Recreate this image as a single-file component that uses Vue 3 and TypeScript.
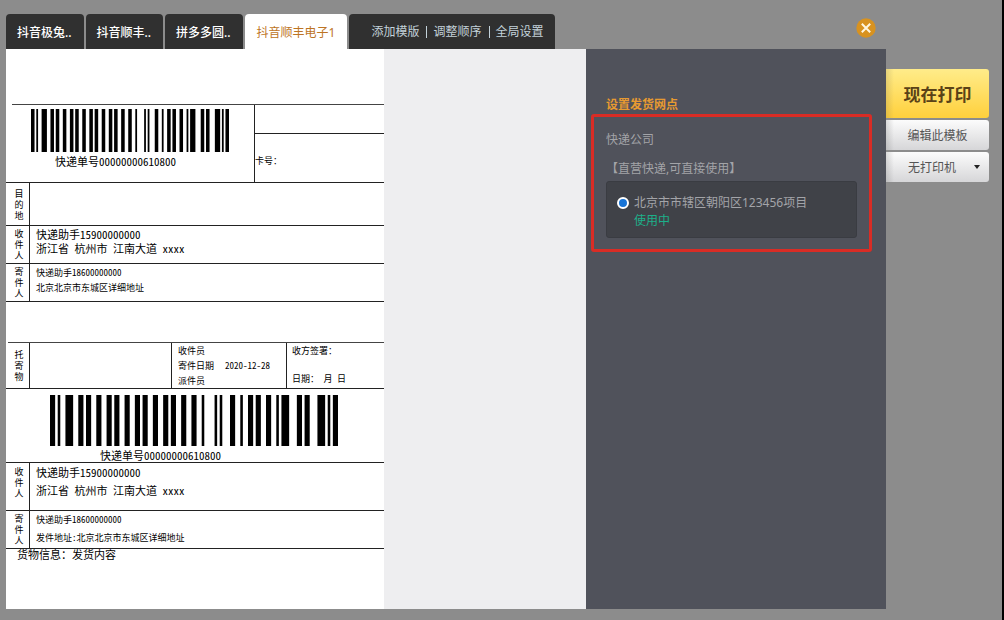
<script setup lang="ts">
import { ref } from 'vue'

interface Bar {
  at: number
  width: number
}

const templates: string[] = ['抖音极兔..', '抖音顺丰..', '拼多多圆..', '抖音顺丰电子1']
const activeTemplate = ref<number>(3)

const actions: string[] = ['添加模版', '调整顺序', '全局设置']

const moduleCount = 112
const bars: Bar[] = [
  [0, 2], [3, 1], [6, 3], [11, 2], [14, 2], [18, 2], [22, 2], [25, 2], [29, 2], [33, 2],
  [36, 2], [40, 2], [44, 2], [47, 2], [51, 2], [55, 2], [59, 1], [64, 1], [66, 1], [70, 2],
  [74, 1], [77, 2], [80, 2], [84, 2], [88, 1], [90, 3], [96, 2], [99, 2], [104, 3], [108, 1],
  [110, 2],
].map(([at, width]) => ({ at, width }))

const trackingNo = '快递单号00000000610800'
const branch = ref<string>('123456')
const printer = ref<string>('无打印机')
</script>

<template>
  <div class="page">
    <main class="workbench">
      <header class="top">
        <div class="tabs" role="tablist">
          <button
            v-for="(name, i) in templates"
            :key="i"
            type="button"
            role="tab"
            class="tab"
            :class="{ active: i === activeTemplate }"
            :aria-selected="i === activeTemplate"
            @click="activeTemplate = i"
          >{{ name }}</button>
        </div>
        <nav class="actions">
          <a v-for="a in actions" :key="a" href="#">{{ a }}</a>
        </nav>
        <button type="button" class="close" aria-label="关闭">
          <svg viewBox="0 0 20 20" width="20" height="20">
            <circle cx="10" cy="10" r="9.7" fill="#d8921f" />
            <path d="M5.8 5.8 14.2 14.2M14.2 5.8 5.8 14.2" stroke="#fff6df" stroke-width="2" />
          </svg>
        </button>
      </header>

      <div class="body">
        <article class="label">
          <div class="blank head"></div>

          <div class="row first">
            <div class="code-cell">
              <svg class="barcode" :viewBox="`0 0 ${moduleCount} 1`" preserveAspectRatio="none">
                <rect v-for="b in bars" :key="b.at" :x="b.at" y="0" :width="b.width" height="1" />
              </svg>
              <p class="tracking">{{ trackingNo }}</p>
            </div>
            <div class="card-cell">
              <div class="card-top"></div>
              <p class="small card-no">卡号：</p>
            </div>
          </div>

          <div class="row dest">
            <div class="side"><span>目的地</span></div>
          </div>
          <div class="row">
            <div class="side"><span>收件人</span></div>
            <div class="info receiver">
              <p>快递助手15900000000</p>
              <p>浙江省 杭州市 江南大道 xxxx</p>
            </div>
          </div>
          <div class="row">
            <div class="side"><span>寄件人</span></div>
            <div class="info small sender">
              <p>快递助手18600000000</p>
              <p>北京北京市东城区详细地址</p>
            </div>
          </div>

          <div class="blank gap"></div>

          <div class="row goods">
            <div class="side"><span>托寄物</span></div>
            <div class="goods-cell"></div>
            <div class="staff small">
              <p>收件员</p>
              <p class="date"><span>寄件日期</span><span>2020-12-28</span></p>
              <p>派件员</p>
            </div>
            <div class="sign small">
              <p>收方签署：</p>
              <p>日期： 月 日</p>
            </div>
          </div>

          <div class="row second">
            <svg class="barcode" :viewBox="`0 0 ${moduleCount} 1`" preserveAspectRatio="none">
              <rect v-for="b in bars" :key="b.at" :x="b.at" y="0" :width="b.width" height="1" />
            </svg>
            <p class="tracking">{{ trackingNo }}</p>
          </div>

          <div class="row stub tall">
            <div class="side"><span>收件人</span></div>
            <div class="info">
              <p>快递助手15900000000</p>
              <p>浙江省 杭州市 江南大道 xxxx</p>
            </div>
          </div>
          <div class="row stub">
            <div class="side"><span>寄件人</span></div>
            <div class="info small">
              <p>快递助手18600000000</p>
              <p>发件地址:北京北京市东城区详细地址</p>
            </div>
          </div>
          <p class="contents">货物信息：发货内容</p>
        </article>

        <div class="canvas"></div>

        <aside class="settings">
          <h2>设置发货网点</h2>
          <section class="company">
            <h3>快递公司</h3>
            <p class="kind">【直营快递,可直接使用】</p>
            <label class="branch">
              <input v-model="branch" type="radio" name="branch" value="123456" />
              <span>北京市市辖区朝阳区123456项目<em>使用中</em></span>
            </label>
          </section>
        </aside>
      </div>
    </main>

    <div class="print">
      <button type="button" class="now">现在打印</button>
      <button type="button" class="edit">编辑此模板</button>
      <div class="printer">
        <select v-model="printer" aria-label="打印机">
          <option>无打印机</option>
        </select>
        <svg class="arrow" viewBox="0 0 6 4" width="6" height="4"><path d="M0 0H6L3 4Z" fill="#222" /></svg>
      </div>
    </div>
  </div>
</template>

<style>
body {
  margin: 0;
  background: #8c8c8c;
}
</style>

<style scoped>
.page {
  box-sizing: border-box;
  display: flex;
  min-height: 100vh;
  padding: 14px 13px 11px 6px;
  border-right: 2px solid #000;
  background: #8c8c8c;
  font-family: "Noto Sans", "Noto Sans CJK SC", sans-serif;
  font-size: 12px;
}

p,
h2,
h3 {
  margin: 0;
  font-size: inherit;
  font-weight: 400;
}

button,
select {
  margin: 0;
  border: 0;
  padding: 0;
  font: inherit;
  cursor: pointer;
}

.workbench {
  flex: 1;
  display: flex;
  flex-direction: column;
}

.top {
  display: flex;
  height: 35px;
}

.tabs {
  display: flex;
  gap: 2px;
  margin-right: 2px;
}

.tab {
  padding: 0 12px 0 11px;
  border-radius: 4px 4px 0 0;
  background: #303030;
  color: #fff;
  font-weight: 500;
}

.tab.active {
  padding: 0 12px;
  background: #fff;
  color: #bd7424;
  font-weight: 400;
}

.actions {
  display: flex;
  align-items: center;
  padding: 0 5px 0 16px;
  border-radius: 4px 4px 0 0;
  background: #303030;
}

.actions a {
  padding: 0 6px;
  color: #c3d2da;
  line-height: 12px;
  text-decoration: none;
}

.actions a + a {
  margin-left: 1px;
  border-left: 1px solid #c3d2da;
}

.close {
  width: 20px;
  height: 20px;
  margin: 4px 10px 0 auto;
  background: none;
}

.close svg {
  display: block;
}

.body {
  flex: 1;
  display: flex;
}

.label {
  width: 378px;
  background: #fff;
  color: #000;
  font-family: "Noto Sans CJK SC", sans-serif;
  font-feature-settings: "hwid";
  font-size: 11px;
}

.small {
  font-size: 9px;
}

.blank {
  border-bottom: 1px solid #444;
}

.head {
  height: 55px;
  margin-left: 6px;
}

.gap {
  height: 40px;
  margin-left: 2px;
}

.row {
  display: flex;
  height: 37px;
  border-bottom: 1px solid #222;
}

.row.first {
  height: 77px;
}

.row.dest {
  height: 42px;
}

.row.goods {
  height: 45px;
}

.row.second {
  flex-direction: column;
  height: 73px;
}

.row.tall {
  height: 47px;
}

.barcode {
  display: block;
  flex: none;
}

.code-cell {
  width: 248px;
  border-right: 1px solid #222;
}

.code-cell .barcode {
  width: 198px;
  height: 43px;
  margin: 4px 0 0 25px;
}

.tracking {
  padding-left: 49px;
  line-height: 18px;
}

.second .barcode {
  width: 288px;
  height: 51px;
  margin: 6px 0 0 44px;
}

.second .tracking {
  padding-left: 94px;
}

.card-cell {
  flex: 1;
}

.card-top {
  height: 28px;
  border-bottom: 1px solid #222;
}

.card-no {
  padding-top: 19px;
  line-height: 16px;
}

.side {
  box-sizing: border-box;
  display: flex;
  align-items: center;
  justify-content: center;
  width: 24px;
  padding-left: 3px;
  border-right: 1px solid #222;
  font-size: 9px;
  line-height: 11px;
}

.side span {
  width: 9px;
  overflow-wrap: anywhere;
}

.tall .side {
  align-items: flex-start;
  padding-top: 3px;
}

.info {
  padding-left: 6px;
}

.receiver {
  padding-top: 1px;
  line-height: 14px;
}

.sender {
  padding-top: 1px;
  line-height: 15px;
}

.stub .info {
  line-height: 18px;
}

.goods-cell {
  width: 141px;
  border-right: 1px solid #222;
}

.staff {
  width: 108px;
  padding-left: 6px;
  border-right: 1px solid #222;
  line-height: 15px;
}

.date {
  display: flex;
  gap: 11px;
}

.sign {
  display: flex;
  flex-direction: column;
  justify-content: space-between;
  padding: 0 0 2px 5px;
  line-height: 15px;
}

.contents {
  padding-left: 11px;
  line-height: 11px;
}

.canvas {
  flex: 1;
  background: #eeeef0;
}

.settings {
  box-sizing: border-box;
  width: 300px;
  padding: 46px 14px 0 5px;
  background: #50525b;
  color: #a3a4a8;
}

.settings h2 {
  padding-left: 15px;
  color: #e79a31;
  font-weight: 700;
  line-height: 19px;
}

.company {
  padding: 14px 12px 11px;
  border: 3px solid #d92c25;
  border-radius: 3px;
}

.company h3,
.kind {
  line-height: 18px;
}

.kind {
  margin: 11px 0 3px;
}

.branch {
  display: flex;
  align-items: flex-start;
  padding: 12px 10px 7px;
  border: 1px solid #3a3c42;
  border-radius: 3px;
  background: #404248;
  line-height: 18px;
}

.branch input {
  flex: none;
  width: 12px;
  height: 12px;
  margin: 3px 5px 0 0;
  appearance: none;
  border: 2px solid #fff;
  border-radius: 50%;
  background: #fff;
}

.branch input:checked {
  background: #1673d6;
}

.branch em {
  display: block;
  color: #1db08a;
  font-style: normal;
}

.print {
  display: flex;
  flex-direction: column;
  gap: 2px;
  width: 103px;
  padding-top: 55px;
}

.now,
.edit,
.printer {
  border-radius: 0 3px 3px 0;
}

.now {
  height: 49px;
  background:
    linear-gradient(90deg, rgba(120, 110, 80, 0.2), rgba(120, 110, 80, 0) 8px),
    linear-gradient(#ffec8a, #ffd03c);
  color: #5a4217;
  font-size: 17px;
  font-weight: 700;
}

.edit,
.printer {
  height: 30px;
  background:
    linear-gradient(90deg, rgba(90, 90, 90, 0.2), rgba(90, 90, 90, 0) 8px),
    linear-gradient(#fcfcfc, #d6d6d8);
  color: #555;
}

.printer {
  display: flex;
  align-items: center;
}

.printer select {
  flex: 1;
  height: 30px;
  padding-left: 22px;
  appearance: none;
  background: none;
  color: inherit;
}

.arrow {
  margin-right: 9px;
}
</style>
